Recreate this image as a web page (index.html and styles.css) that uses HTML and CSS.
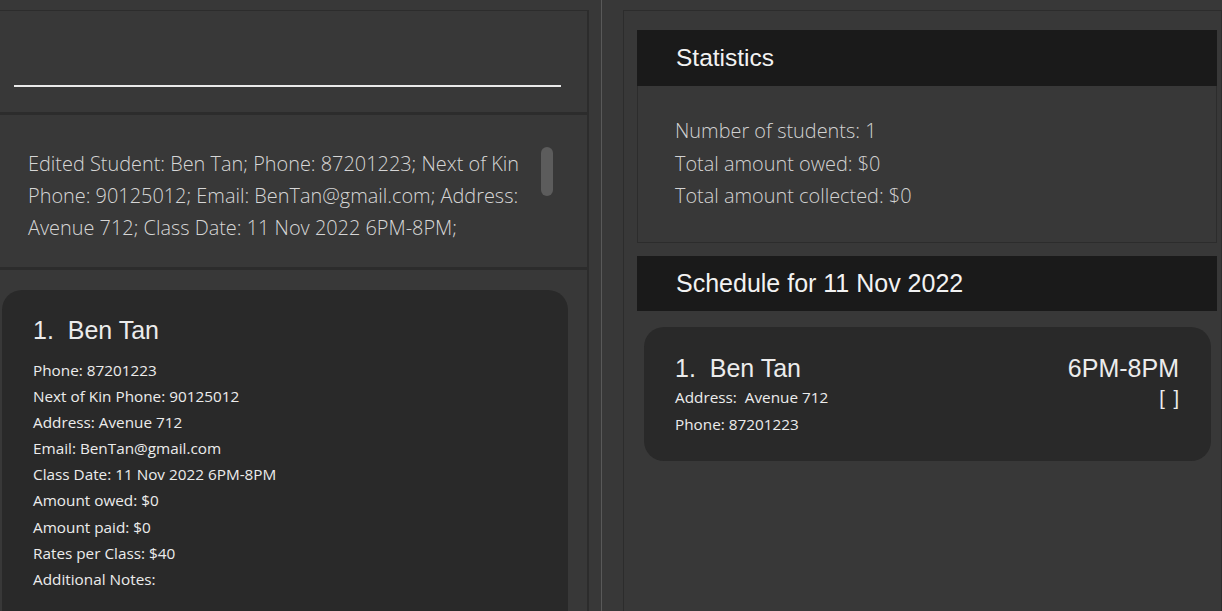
FILE: index.html
```html
<!DOCTYPE html>
<html>
<head>
<meta charset="utf-8">
<link rel="stylesheet" href="styles.css">
</head>
<body>
<div class="app">
  <div class="left">
    <div class="cmd-box">
      <div class="cmd-line"></div>
    </div>
    <div class="result-box">
      <p class="result-text">Edited Student: Ben Tan; Phone: 87201223; Next of Kin Phone: 90125012; Email: BenTan@gmail.com; Address: Avenue 712; Class Date: 11 Nov 2022 6PM-8PM;</p>
      <div class="scroll-thumb"></div>
    </div>
    <div class="list-area">
      <div class="card student-card">
        <div class="card-title">1.&nbsp;&nbsp;Ben Tan</div>
        <div class="field">Phone: 87201223</div>
        <div class="field">Next of Kin Phone: 90125012</div>
        <div class="field">Address: Avenue 712</div>
        <div class="field">Email: BenTan@gmail.com</div>
        <div class="field">Class Date: 11 Nov 2022 6PM-8PM</div>
        <div class="field">Amount owed: $0</div>
        <div class="field">Amount paid: $0</div>
        <div class="field">Rates per Class: $40</div>
        <div class="field">Additional Notes:</div>
      </div>
    </div>
  </div>
  <div class="divider"><div class="divider-line"></div></div>
  <div class="right">
    <div class="section-header">Statistics</div>
    <div class="stats-box">
      <div class="stat">Number of students: 1</div>
      <div class="stat">Total amount owed: $0</div>
      <div class="stat">Total amount collected: $0</div>
    </div>
    <div class="section-header schedule-header">Schedule for 11 Nov 2022</div>
    <div class="card schedule-card">
      <div class="sched-main">
        <div class="card-title">1.&nbsp;&nbsp;Ben Tan</div>
        <div class="field">Address:&nbsp;&nbsp;Avenue 712</div>
        <div class="field">Phone: 87201223</div>
      </div>
      <div class="sched-side">
        <div class="sched-time">6PM-8PM</div>
        <div class="sched-mark">[ ]</div>
      </div>
    </div>
  </div>
</div>
</body>
</html>
```

FILE: styles.css
```css
html, body {
  margin: 0;
  padding: 0;
  background: #383838;
  overflow: hidden;
}
.app {
  display: flex;
  width: 1222px;
  height: 611px;
  overflow: hidden;
}
.left {
  width: 592px;
  margin-left: -3px;
  padding-top: 10px;
  display: flex;
  flex-direction: column;
  flex-shrink: 0;
  min-height: 0;
}
.cmd-box {
  flex-shrink: 0;
  height: 102px;
  border-top: 1px solid #2c2c2c;
  border-right: 2px solid #2c2c2c;
  border-left: 1px solid #2c2c2c;
  box-sizing: border-box;
  padding: 74px 0 0 16px;
}
.cmd-line {
  width: 547px;
  height: 2px;
  background: #e9e9e9;
}
.result-box {
  flex-shrink: 0;
  height: 158px;
  border-top: 3px solid #2c2c2c;
  border-bottom: 3px solid #2c2c2c;
  border-right: 2px solid #2c2c2c;
  border-left: 1px solid #2c2c2c;
  box-sizing: border-box;
  position: relative;
  padding: 33px 0 0 30px;
}
.result-text {
  margin: 0;
  width: 505px;
  font-family: "Open Sans", sans-serif;
  font-weight: 300;
  font-size: 19.9px;
  line-height: 32px;
  color: #d6d6d6;
}
.scroll-thumb {
  position: absolute;
  left: 543px;
  top: 32px;
  width: 12px;
  height: 49px;
  border-radius: 6px;
  background: #5c5c5c;
}
.list-area {
  flex: 1;
  min-height: 0;
  overflow: hidden;
  border-right: 2px solid #2c2c2c;
  padding: 20px 0 0 5px;
}
.card {
  background: #292929;
  border-radius: 20px;
}
.student-card {
  width: 566px;
  padding: 24px 0 40px 31px;
  box-sizing: border-box;
}
.card-title {
  font-family: "Liberation Sans", Arial, sans-serif;
  font-size: 25px;
  color: #ececec;
  line-height: 32px;
  margin-bottom: 11px;
}
.field {
  font-family: "Open Sans", sans-serif;
  font-size: 15.3px;
  line-height: 26.1px;
  color: #ececec;
}
.divider {
  width: 34px;
  flex-shrink: 0;
  display: flex;
  padding-left: 12px;
  box-sizing: border-box;
}
.divider-line {
  width: 1px;
  background: #595959;
}
.right {
  width: 599px;
  margin-top: 10px;
  border: 1px solid #2c2c2c;
  border-bottom: none;
  box-sizing: border-box;
  padding: 19px 4px 0 13px;
  display: flex;
  flex-direction: column;
  flex-shrink: 0;
}
.section-header {
  height: 56px;
  background: #1a1a1a;
  display: flex;
  align-items: center;
  padding-left: 39px;
  font-family: "Liberation Sans", Arial, sans-serif;
  font-size: 24.5px;
  color: #f2f2f2;
  flex-shrink: 0;
}
.stats-box {
  height: 157px;
  box-sizing: border-box;
  border: 1px solid #2c2c2c;
  border-top: none;
  padding: 29px 0 0 37px;
  margin-bottom: 13px;
}
.stat {
  font-family: "Open Sans", sans-serif;
  font-weight: 300;
  font-size: 19.9px;
  line-height: 32.5px;
  color: #d2d2d2;
}
.schedule-header {
  height: 55px;
  font-size: 25px;
}
.schedule-card {
  margin: 16px 6px 0 7px;
  height: 134px;
  display: flex;
  justify-content: space-between;
  padding: 25px 32px 0 31px;
  box-sizing: border-box;
}
.sched-main .card-title {
  margin-bottom: 0;
}
.sched-main .field {
  line-height: 27px;
}
.sched-side {
  display: flex;
  flex-direction: column;
  align-items: flex-end;
}
.sched-time {
  font-family: "Liberation Sans", Arial, sans-serif;
  font-size: 25px;
  line-height: 32px;
  color: #ececec;
}
.sched-mark {
  font-family: "Liberation Sans", Arial, sans-serif;
  font-size: 20px;
  line-height: 28px;
  word-spacing: 3px;
  color: #ececec;
}
```
